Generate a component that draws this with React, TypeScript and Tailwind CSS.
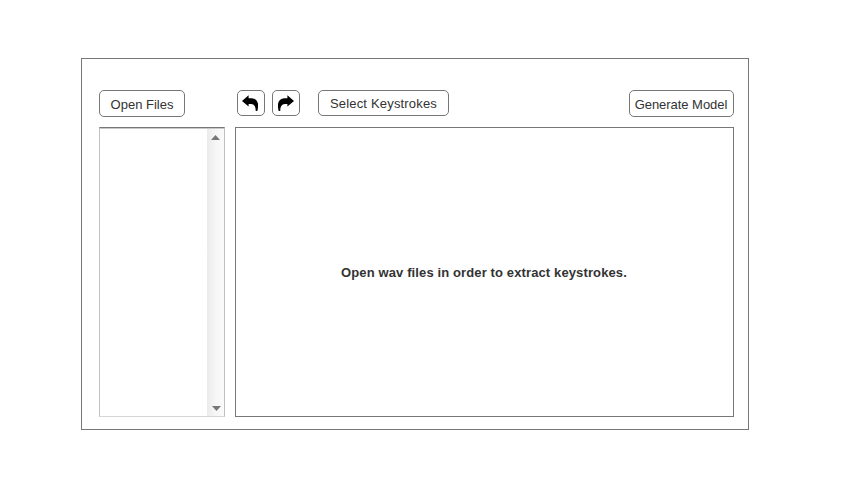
import type { ReactNode } from "react";

function ToolButton({ className, label, children }: { className: string; label?: string; children: ReactNode }) {
  return (
    <button
      aria-label={label}
      className={`flex shrink-0 items-center justify-center rounded-[5px] border border-[#777777] bg-white text-[13px] leading-[15px] whitespace-nowrap text-[#333333] ${className}`}
    >
      {children}
    </button>
  );
}

function CurvedArrow({ flipped = false }: { flipped?: boolean }) {
  return (
    <svg width="16" height="18" viewBox="0 0 16 18" className={flipped ? "-scale-x-100" : "-ml-[2px]"}>
      <path d="M0 7 6.600 1.200v3.100h3c4.400.3 6.500 3 6.500 7.200 0 2-.3 3.800-.8 5.500h-1.600c0-4.300-1.200-6.700-4.700-6.900H6.600v2.500Z" fill="#000" />
    </svg>
  );
}

function FileList() {
  return (
    <div className="flex h-[290px] w-[126px] shrink-0 border border-[#c0c0c0] border-t-[#777777] border-b-[#d6d6d6] bg-white">
      <div className="grow border-t border-[#c8c8c8]" />
      <div className="flex w-[17px] shrink-0 flex-col items-center justify-between border-t border-[#c8c8c8] bg-linear-to-r from-[#ebebeb] via-[#f6f6f6] to-[#fafafa] pt-[6px] pb-[5px]">
        <svg width="9" height="5" viewBox="0 0 9 5">
          <path d="M0 5 4.500 0 9 5Z" fill="#777777" />
        </svg>
        <svg width="9" height="5" viewBox="0 0 9 5" className="ml-px">
          <path d="M0 0h9L4.500 5Z" fill="#777777" />
        </svg>
      </div>
    </div>
  );
}

export default function App() {
  return (
    <div className="h-[492px] w-[855px] bg-white pt-[58px] pl-[81px] font-['Liberation_Sans',Arial,sans-serif] text-[#333333]">
      <main className="h-[372px] w-[668px] border border-[#777777] pt-[31px] pl-[17px]">
        <header className="flex h-[37px] items-start">
          <ToolButton className="h-[27px] w-[86px] pt-px">Open Files</ToolButton>
          <ToolButton className="ml-[52px] h-[26px] w-7" label="Undo">
            <CurvedArrow />
          </ToolButton>
          <ToolButton className="ml-[7px] h-[26px] w-7" label="Redo">
            <CurvedArrow flipped />
          </ToolButton>
          <ToolButton className="ml-[18px] h-[26px] w-[131px] tracking-[0.18px]">Select Keystrokes</ToolButton>
          <ToolButton className="ml-[180px] h-[27px] w-[105px] pt-px pr-px tracking-[-0.04px]">Generate Model</ToolButton>
        </header>
        <div className="flex gap-[10px]">
          <FileList />
          <section className="flex h-[290px] w-[499px] shrink-0 items-center justify-center border border-[#777777] pr-px">
            <p className="text-[13px] leading-[15px] font-bold tracking-[0.12px] whitespace-nowrap">
              Open wav files in order to extract keystrokes.
            </p>
          </section>
        </div>
      </main>
    </div>
  );
}
